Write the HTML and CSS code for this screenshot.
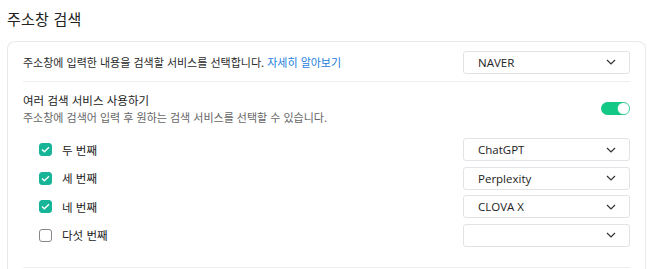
FILE: index.html
```html
<!DOCTYPE html>
<html lang="ko">
<head>
<meta charset="utf-8">
<link rel="stylesheet" href="styles.css">
</head>
<body>
<h1 class="title">주소창 검색</h1>
<section class="card">
  <div class="row first">
    <p class="desc">주소창에 입력한 내용을 검색할 서비스를 선택합니다. <a class="link" href="#">자세히 알아보기</a></p>
    <div class="select"><span>NAVER</span><svg class="chev" width="10" height="6" viewBox="0 0 10 6"><path d="M1 1l4 4 4-4" fill="none" stroke="#333" stroke-width="1.2"/></svg></div>
  </div>
  <div class="multi">
    <div class="multi-head">
      <div>
        <div class="multi-title">여러 검색 서비스 사용하기</div>
        <div class="multi-sub">주소창에 검색어 입력 후 원하는 검색 서비스를 선택할 수 있습니다.</div>
      </div>
      <div class="toggle"><span class="knob"></span></div>
    </div>
    <div class="opt">
      <label class="check"><span class="box on"><svg width="9" height="7" viewBox="0 0 9 7"><path d="M1 3.6l2.3 2.2L8 1.2" fill="none" stroke="#fff" stroke-width="1.4"/></svg></span>두 번째</label>
      <div class="select"><span>ChatGPT</span><svg class="chev" width="10" height="6" viewBox="0 0 10 6"><path d="M1 1l4 4 4-4" fill="none" stroke="#333" stroke-width="1.2"/></svg></div>
    </div>
    <div class="opt">
      <label class="check"><span class="box on"><svg width="9" height="7" viewBox="0 0 9 7"><path d="M1 3.6l2.3 2.2L8 1.2" fill="none" stroke="#fff" stroke-width="1.4"/></svg></span>세 번째</label>
      <div class="select"><span>Perplexity</span><svg class="chev" width="10" height="6" viewBox="0 0 10 6"><path d="M1 1l4 4 4-4" fill="none" stroke="#333" stroke-width="1.2"/></svg></div>
    </div>
    <div class="opt">
      <label class="check"><span class="box on"><svg width="9" height="7" viewBox="0 0 9 7"><path d="M1 3.6l2.3 2.2L8 1.2" fill="none" stroke="#fff" stroke-width="1.4"/></svg></span>네 번째</label>
      <div class="select"><span>CLOVA X</span><svg class="chev" width="10" height="6" viewBox="0 0 10 6"><path d="M1 1l4 4 4-4" fill="none" stroke="#333" stroke-width="1.2"/></svg></div>
    </div>
    <div class="opt">
      <label class="check"><span class="box"></span>다섯 번째</label>
      <div class="select"><span></span><svg class="chev" width="10" height="6" viewBox="0 0 10 6"><path d="M1 1l4 4 4-4" fill="none" stroke="#333" stroke-width="1.2"/></svg></div>
    </div>
  </div>
</section>
</body>
</html>
```
FILE: styles.css
```css
* { box-sizing: border-box; }
html, body { margin: 0; padding: 0; background: #fff; }
body {
  font-family: "Noto Sans CJK KR", "Noto Sans", sans-serif;
  color: #222;
  padding: 0 12px 0 7px;
  overflow: hidden;
  height: 269px;
}
.title {
  margin: 0;
  padding-top: 8px;
  height: 41px;
  font-size: 15px;
  font-weight: 400;
  line-height: 22px;
  color: #222;
  letter-spacing: 0.2px;
}
.card {
  border: 1px solid #e8e9ec;
  border-bottom: none;
  border-radius: 8px 8px 0 0;
  padding: 0 15px 2px;
}
.row.first {
  display: flex;
  align-items: center;
  justify-content: space-between;
  height: 40px;
  padding-top: 1px;
  border-bottom: 1px solid #efeff1;
}
.desc {
  margin: 0;
  font-size: 11px;
  letter-spacing: 0;
  color: #2a2a2a;
}
.link { color: #1a80e0; text-decoration: none; }
.select {
  width: 167px;
  height: 23px;
  border: 1px solid #e2e3e6;
  border-radius: 3px;
  display: flex;
  align-items: center;
  justify-content: space-between;
  padding: 0 13px 0 14px;
  font-family: "Open Sans", "Noto Sans", sans-serif;
  font-size: 11.5px;
  color: #222;
}
.chev { display: block; }
.multi { padding-top: 10px; padding-bottom: 20px; border-bottom: 1px solid #efeff1; }
.multi-head {
  display: flex;
  align-items: center;
  justify-content: space-between;
  margin-bottom: 12px;
}
.multi-title { font-size: 11.5px; line-height: 17px; color: #222; letter-spacing: 0; }
.multi-sub { font-size: 11px; line-height: 17px; color: #666; letter-spacing: 0; }
.toggle {
  width: 29px;
  height: 13px;
  border-radius: 7px;
  background: #13c784;
  position: relative;
  margin-top: -2px;
}
.knob {
  position: absolute;
  right: 1px;
  top: 1px;
  width: 11px;
  height: 11px;
  border-radius: 50%;
  background: #fff;
  box-shadow: 0 0 0 0.5px #7fe3bb;
}
.opt {
  display: flex;
  align-items: center;
  justify-content: space-between;
  height: 23px;
  margin-bottom: 5.5px;
}
.opt:last-child { margin-bottom: 0; }
.check {
  display: flex;
  align-items: center;
  padding-left: 16px;
  font-size: 11.5px;
  color: #222;
}
.box {
  width: 13px;
  height: 13px;
  border-radius: 3px;
  border: 1px solid #888;
  margin-right: 10px;
  display: flex;
  align-items: center;
  justify-content: center;
}
.box.on { background: #16b597; border-color: #16b597; }
```
